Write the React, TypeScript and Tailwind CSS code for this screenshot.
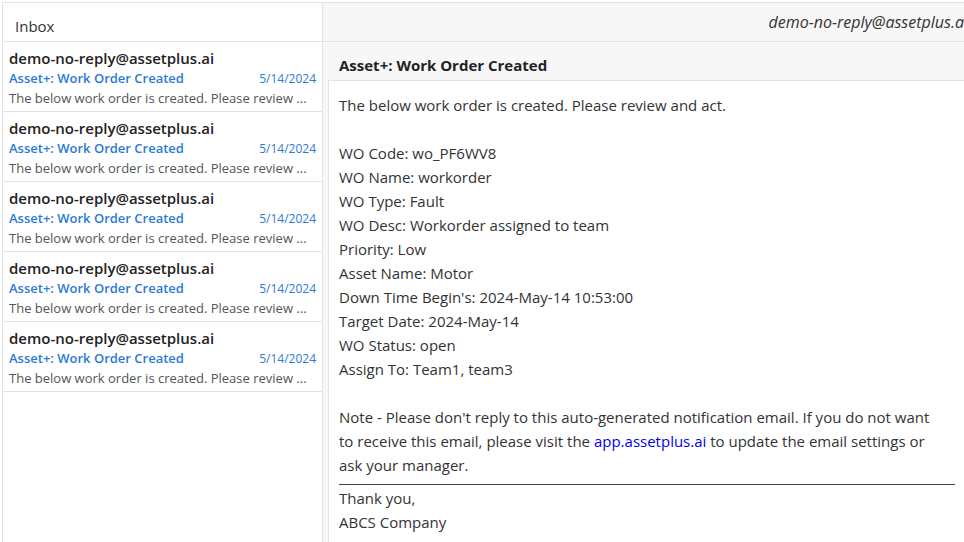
import React from "react";

const items = Array.from({ length: 5 });

export default function App() {
  return (
    <div
      className="h-[542px] w-[964px] overflow-hidden bg-white text-[#333]"
      style={{ fontFamily: '"Open Sans", "Noto Sans", sans-serif' }}
    >
      <div className="ml-[2px] mt-[2px] flex h-[540px] w-[968px] border-l border-t border-[#e3e3e3]">
        {/* Left list */}
        <div className="flex w-[320px] shrink-0 flex-col border-r border-[#e3e3e3]">
          <div className="flex h-[39px] items-center border-b border-[#e3e3e3] pl-[12px] pt-[8px] text-[15px] text-[#333]">
            Inbox
          </div>
          {items.map((_, i) => (
            <div key={i} className="flex h-[70px] flex-col border-b border-[#e3e3e3] pl-[6px] pr-[6px] pt-[5px]">
              <div className="text-[15px] font-semibold leading-[22px] text-[#222]">demo-no-reply@assetplus.ai</div>
              <div className="flex items-baseline justify-between leading-[18px]">
                <span className="text-[13px] font-semibold text-[#2a7ad6]">Asset+: Work Order Created</span>
                <span className="text-[12px] text-[#2a7ad6]">5/14/2024</span>
              </div>
              <div className="whitespace-nowrap text-[13px] leading-[20px] text-[#555]">
                The below work order is created. Please review ...
              </div>
            </div>
          ))}
        </div>
        {/* Right pane */}
        <div className="flex flex-1 flex-col bg-[#f7f7f7]">
          <div className="flex h-[39px] items-center justify-end border-b border-[#e3e3e3] pr-[2px] text-[16px] italic text-[#333]">
            demo-no-reply@assetplus.ai
          </div>
          <div className="flex h-[38px] items-center pl-[16px] pt-[8px] text-[15px] font-bold text-[#222]">
            Asset+: Work Order Created
          </div>
          <div className="ml-[5px] flex-1 border-l border-t border-[#e3e3e3] bg-white pl-[10px] pr-[11px] pt-[12px] text-[15px] leading-[24px] text-[#333]">
            <div>The below work order is created. Please review and act.</div>
            <div className="h-[24px]" />
            <div>WO Code: wo_PF6WV8</div>
            <div>WO Name: workorder</div>
            <div>WO Type: Fault</div>
            <div>WO Desc: Workorder assigned to team</div>
            <div>Priority: Low</div>
            <div>Asset Name: Motor</div>
            <div>Down Time Begin's: 2024-May-14 10:53:00</div>
            <div>Target Date: 2024-May-14</div>
            <div>WO Status: open</div>
            <div>Assign To: Team1, team3</div>
            <div className="h-[24px]" />
            <div className="w-[596px]">
              Note - Please don't reply to this auto-generated notification email. If you do not want to receive this email, please visit the{" "}
              <span className="text-[#0000ee]">app.assetplus.ai</span> to update the email settings or ask your manager.
            </div>
            <div className="mt-[7px] w-[616px] border-t border-[#444]" />
            <div className="pt-[1px]">Thank you,</div>
            <div>ABCS Company</div>
          </div>
        </div>
      </div>
    </div>
  );
}
